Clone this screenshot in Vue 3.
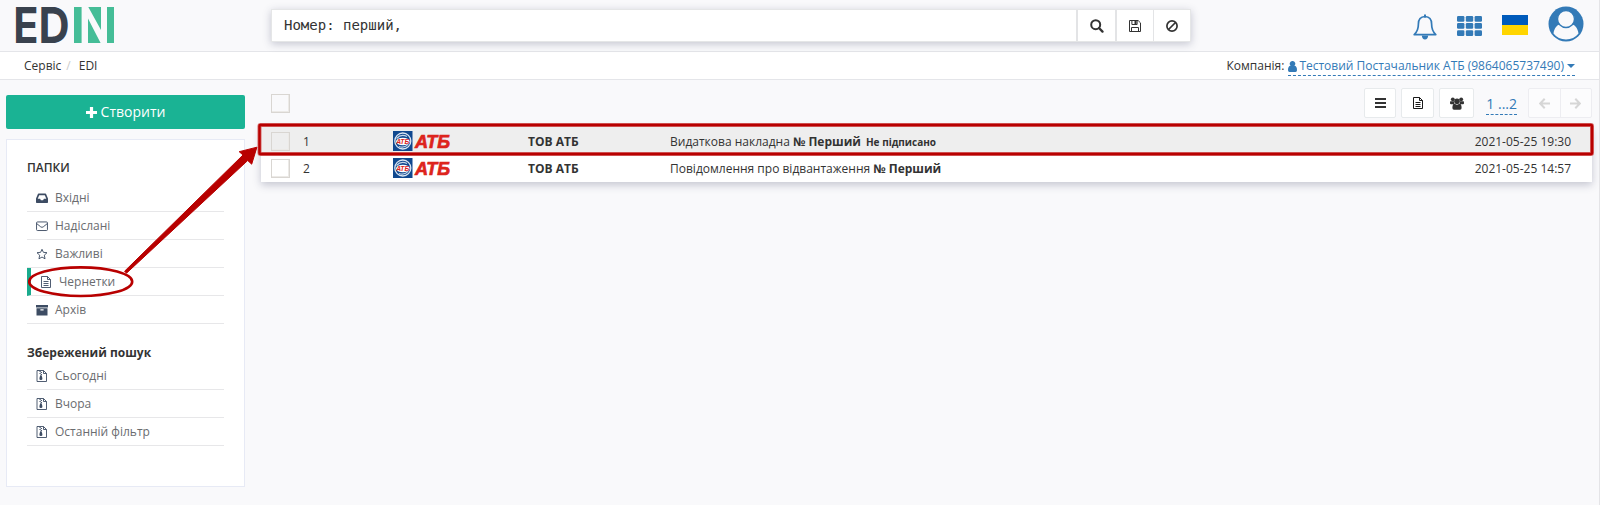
<script setup>
const folders = [
  { label: 'Вхідні', icon: 'inbox' },
  { label: 'Надіслані', icon: 'mail' },
  { label: 'Важливі', icon: 'star' },
  { label: 'Чернетки', icon: 'doc', active: true },
  { label: 'Архів', icon: 'archive' },
]
const searches = ['Сьогодні', 'Вчора', 'Останній фільтр']
const rows = [
  { id: 1, company: 'ТОВ АТБ', type: 'Видаткова накладна', number: '№ Перший', note: 'Не підписано', date: '2021-05-25 19:30' },
  { id: 2, company: 'ТОВ АТБ', type: 'Повідомлення про відвантаження', number: '№ Перший', note: '', date: '2021-05-25 14:57' },
]
</script>

<template>
  <div class="page">
    <svg class="defs" width="0" height="0">
      <symbol id="doc" viewBox="0 0 12 14">
        <path d="M1.500 1.500h6l3 3v8h-9zM7.500 1.500v3h3M3.500 6.500h5M3.500 8.500h5M3.500 10.500h5" fill="none" stroke="currentColor" stroke-width=".9" />
      </symbol>
      <symbol id="inbox" viewBox="0 0 12 14">
        <path fill-rule="evenodd" d="M2.600 2.600h6.800q.5 0 .7.5L12 7.600v3.700q0 .7-.7.7H.7q-.7 0-.7-.7V7.600l1.900-4.500q.2-.5.7-.5zM3.200 4.200 1.700 7.700h2.400l.8 1.500h2.200l.8-1.500h2.400L8.800 4.200z" fill="currentColor" />
      </symbol>
      <symbol id="mail" viewBox="0 0 13 14">
        <path d="M.6 3.600q0-1 1-1h9.800q1 0 1 1v7.300q0 1-1 1H1.600q-1 0-1-1zM.8 4.400l4.300 3.500q1.400 1.100 2.800 0l4.300-3.500" fill="none" stroke="currentColor" stroke-width="1" />
      </symbol>
      <symbol id="star" viewBox="0 0 13 14">
        <path d="M6.500 1.900 8 5.200l3.900.4-2.900 2.700.8 3.900-3.300-1.900-3.300 1.900.8-3.900L1.100 5.600l3.900-.4z" fill="none" stroke="currentColor" stroke-width="1" stroke-linejoin="round" />
      </symbol>
      <symbol id="archive" viewBox="0 0 12 14">
        <path fill-rule="evenodd" d="M0 2h12v2.600H0zM.5 5.200h11v7.300H.5zM4.400 6.200v1.200h3.200V6.200z" fill="currentColor" />
      </symbol>
      <symbol id="zip" viewBox="0 0 12 14">
        <path d="M1 1.500h6.500l3 3v8H1zM7.500 1.500v3h3" fill="none" stroke="currentColor" stroke-width=".9" />
        <path d="M3.500 2h1.200v1H3.500zM4.700 3h1.200v1H4.700zM3.500 4h1.200v1H3.500zM4.700 5h1.200v1H4.700zM4.200 6.200h1.400l.8 3q.2 1.900-1.500 1.900t-1.500-1.900z" fill="currentColor" />
      </symbol>
    </svg>

    <header class="top">
      <svg class="logo" width="100" height="38" viewBox="0 0 100 38">
        <g class="logo-text">
          <text transform="translate(-1.800 37) scale(.84 1)">E</text>
          <text transform="translate(23.500 37) scale(.87 1)">D</text>
        </g>
        <path d="M59 1h7.600v36H59zM73.300 1H86v23zM73 12.500 85.600 37H73zM92 1h7v36h-7z" fill="#45bd97" />
      </svg>
      <div class="search">
        <div class="query">Номер: перший,</div>
        <button class="sbtn first">
          <svg width="14" height="14" viewBox="0 0 14 14"><circle cx="5.700" cy="5.700" r="4.500" fill="none" stroke="#333" stroke-width="2" /><path d="m9 9 3.500 3.600" stroke="#333" stroke-width="2.300" stroke-linecap="round" /></svg>
        </button>
        <button class="sbtn">
          <svg width="12" height="12" viewBox="0 0 12 12"><path d="M.5.500h8.600l2.400 2.400v8.600H.500zM2.500 11.500V7.500h7v4M2.900.500v4h5.200v-4" fill="none" stroke="#333" /><path d="M5.500 1h2v3h-2z" fill="#333" /></svg>
        </button>
        <button class="sbtn last">
          <svg width="12" height="12" viewBox="0 0 12 12"><circle cx="6" cy="6" r="5.100" fill="none" stroke="#333" stroke-width="1.700" /><path d="m2.500 9.500 7-7" stroke="#333" stroke-width="1.700" /></svg>
        </button>
      </div>
      <div class="tools">
        <svg class="bell" width="24" height="27" viewBox="0 0 24 27">
          <path d="M12 2.500c-4.600.2-6.600 3.200-6.600 7.500 0 5.700-1.500 8.200-4.200 10.600h21.600c-2.700-2.400-4.200-4.900-4.200-10.600 0-4.300-2-7.300-6.600-7.500z" fill="none" stroke="#337ab7" stroke-width="1.700" stroke-linejoin="round" />
          <path d="M11 .5h2v3h-2zM8.800 21.500h6.400q-.4 4-3.200 4t-3.200-4z" fill="#337ab7" />
        </svg>
        <svg class="apps" width="25" height="20" viewBox="0 0 25 20" fill="#337ab7">
          <template v-for="r in 3" :key="r">
            <rect v-for="c in 3" :key="c" :x="(c - 1) * 8.800" :y="(r - 1) * 7.100" width="7.400" height="5.700" rx="1.200" />
          </template>
        </svg>
        <div class="flag"></div>
        <svg class="avatar" width="36" height="36" viewBox="0 0 36 36">
          <circle cx="18" cy="18" r="17.500" fill="#337ab7" />
          <path d="M5.500 27.500c.8-5.200 3.200-8.400 6.600-8.900q5.900 4.600 11.800 0c3.400.5 5.800 3.700 6.600 8.900q-4.600 5.900-12.500 5.900T5.500 27.500z" fill="#f9f9fb" />
          <circle cx="18" cy="13" r="8.500" fill="#f9f9fb" stroke="#337ab7" stroke-width="1.400" />
        </svg>
      </div>
    </header>

    <nav class="crumbs">
      <div class="path"><span>Сервіс</span><i>/</i><span>EDI</span></div>
      <div class="firm">
        <span>Компанія:</span>
        <a class="account">
          <svg width="9" height="11" viewBox="0 0 9 11" fill="#337ab7"><path d="M4.500 0a2.700 2.700 0 0 1 1.900 4.700Q9 4.800 9 9.200 9 11 7.500 11h-6Q0 11 0 9.200 0 4.800 2.600 4.700A2.700 2.700 0 0 1 4.500 0z" /></svg>
          <span>Тестовий Постачальник АТБ (9864065737490)</span>
          <b class="caret"></b>
        </a>
      </div>
    </nav>

    <main class="body">
      <aside class="side">
        <button class="create">
          <svg width="11" height="11" viewBox="0 0 11 11"><path d="M3.900 0h3.200v3.900H11v3.200H7.100V11H3.900V7.100H0V3.900h3.900z" fill="#fff" /></svg>
          <span>Створити</span>
        </button>
        <div class="panel">
          <h5 class="caps">ПАПКИ</h5>
          <ul>
            <li v-for="f in folders" :key="f.label" :class="{ active: f.active }">
              <svg class="ico" width="12" height="14"><use :href="'#' + f.icon" /></svg>{{ f.label }}
            </li>
          </ul>
          <h5 class="saved">Збережений пошук</h5>
          <ul>
            <li v-for="s in searches" :key="s">
              <svg class="ico" width="12" height="14"><use href="#zip" /></svg>{{ s }}
            </li>
          </ul>
        </div>
      </aside>

      <section class="list">
        <div class="bar">
          <span class="check"></span>
          <div class="actions">
            <button class="abtn b1"><svg width="11" height="10" viewBox="0 0 11 10"><path d="M0 1h11M0 5h11M0 9h11" stroke="#333" stroke-width="1.900" /></svg></button>
            <button class="abtn b2"><svg width="12" height="14"><use href="#doc" /></svg></button>
            <button class="abtn b3">
              <svg width="14" height="13" viewBox="0 0 14 13" fill="#333"><circle cx="2.800" cy="2.300" r="1.900" /><circle cx="11.200" cy="2.300" r="1.900" /><path d="M.3 4.300h3.800v3H1Q0 7.300 0 6.300 0 5 .3 4.300zM9.900 4.300h3.800q.3.700.3 2 0 1-1 1H9.900z" /><circle cx="7" cy="4.300" r="2.800" /><path d="M4.300 6.600Q7 8.800 9.700 6.600q1.900.6 1.900 4.400 0 1.800-1.600 1.800H4q-1.600 0-1.600-1.800 0-3.800 1.900-4.400z" /></svg>
            </button>
            <a class="pages">1 ...2</a>
            <div class="pager">
              <span><svg width="11" height="11" viewBox="0 0 11 11"><path d="M5.700.8 1.200 5.500l4.500 4.700M1.500 5.500H11" fill="none" stroke="#d6d6d6" stroke-width="2" /></svg></span>
              <span><svg width="11" height="11" viewBox="0 0 11 11"><path d="m5.300.8 4.500 4.700-4.500 4.700M9.500 5.500H0" fill="none" stroke="#d6d6d6" stroke-width="2" /></svg></span>
            </div>
          </div>
        </div>
        <div class="table">
          <div v-for="r in rows" :key="r.id" class="row" :class="{ hover: r.id === 1 }">
            <span class="check"></span>
            <span class="num">{{ r.id }}</span>
            <svg class="brand" width="58" height="20" viewBox="0 0 58 20">
              <rect width="19.500" height="20" fill="#10488f" />
              <circle cx="9.800" cy="10" r="8" fill="none" stroke="#dbe6f2" stroke-width="1.300" />
              <ellipse cx="9.800" cy="10.500" rx="6.800" ry="3.800" fill="#fff" />
              <path d="M3.500 7.500Q8 2.500 14 5.500M6 15.500q6 2 9.500-3" fill="none" stroke="#c4d6ea" stroke-width="1.200" />
              <text class="mini" x="3.200" y="12.500" textLength="13" lengthAdjust="spacingAndGlyphs">АТБ</text>
              <text class="word" x="22" y="16.800" textLength="35" lengthAdjust="spacingAndGlyphs">АТБ</text>
            </svg>
            <b class="company">{{ r.company }}</b>
            <span class="title">{{ r.type }} <b>{{ r.number }}</b><b v-if="r.note" class="note">{{ r.note }}</b></span>
            <span class="date">{{ r.date }}</span>
          </div>
        </div>
      </section>
    </main>

    <svg class="marks" width="1600" height="505" viewBox="0 0 1600 505">
      <rect x="259.500" y="125" width="1332.500" height="29" rx="1" fill="none" stroke="#d66a6a" stroke-width="4" />
      <rect x="259.500" y="125" width="1332.500" height="29" rx="1" fill="none" stroke="#b80000" stroke-width="2.400" />
      <ellipse cx="80.700" cy="281.700" rx="51.500" ry="14.300" fill="none" stroke="#b80000" stroke-width="2.600" />
      <path d="M124.600 271.200 243 155l-3.800-3.300 17.700-4.500-5.200 17-4-3.700L126.500 273.200z" fill="#b80000" stroke="#b80000" stroke-linejoin="round" />
    </svg>
  </div>
</template>

<style>
body { background: #f9f9fb; }
</style>

<style scoped>
* { box-sizing: border-box; }
.page { position: relative; width: 1600px; height: 505px; overflow: hidden; background: #f9f9fb; color: #333; font: 12px/18px "Open Sans", sans-serif; border-right: 1px solid #e4e4e7; }
.defs { position: absolute; }
button { font: inherit; padding: 0; border: 0; background: #fff; display: flex; align-items: center; justify-content: center; }
.top { height: 52px; border-bottom: 1px solid #e4e5e9; display: flex; align-items: flex-start; }
.logo { margin: 6px 0 0 15px; overflow: visible; }
.logo-text { font: 700 49.500px Inter, sans-serif; fill: #39424e; }
.search { margin: 9px 0 0 156px; width: 920px; height: 33px; display: flex; background: #fff; border: 1px solid #e5e6e7; box-shadow: 0 2px 8px rgba(60, 65, 100, .28); }
.query { flex: 1; padding-left: 12px; font: 14px/30px "DejaVu Sans Mono", monospace; }
.sbtn { width: 37px; border-left: 1px solid #e3e4e6; }
.sbtn.first { width: 40px; border-left: 2px solid #e3e4e6; border-right: 1px solid #e3e4e6; }
.tools { margin-left: auto; display: flex; padding-right: 15px; }
.bell { margin: 14px 20px 0 0; }
.apps { margin: 16px 20px 0 0; }
.flag { width: 26px; height: 20px; margin: 15px 20px 0 0; background: linear-gradient(#005bbb 50%, #ffd500 50%); }
.avatar { margin-top: 6px; }
.crumbs { height: 28px; background: #fff; border-bottom: 1px solid #e4e5e9; display: flex; justify-content: space-between; padding: 5px 24px 0 24px; }
.path i { color: #ccc; font-style: normal; margin: 0 8px 0 5px; }
.firm { display: flex; gap: 4px; }
.account { display: flex; align-items: center; height: 19px; color: #337ab7; border-bottom: 1px dashed #337ab7; }
.account span { margin: 0 3px 0 2px; }
.caret { border: 4px solid transparent; border-top-color: #337ab7; border-bottom: 0; }
.body { display: flex; align-items: flex-start; }
.side { width: 239px; margin: 15px 0 0 6px; }
.create { width: 100%; height: 34px; border-radius: 2px; background: #1ab394; color: #fff; font-size: 14px; gap: 4px; }
.panel { margin-top: 10px; height: 348px; border: 1px solid #e7eaf5; background: #fff; padding: 19px 20px 0; }
h5 { margin: 0; font-size: 12px; line-height: 18px; font-weight: 700; color: #333; }
.caps { font-weight: 600; margin-bottom: 7px; }
.saved { margin: 20px 0 0; }
ul { list-style: none; margin: 0; padding: 0; }
li { height: 28px; display: flex; align-items: center; padding: 1px 0 0 9px; border-bottom: 1px solid #e7e7e9; color: #6a6c6f; }
li.active { border-left: 4px solid #1aab8d; }
.ico { margin-right: 7px; color: #3d4c63; overflow: visible; }
.list { width: 1331px; margin-left: 16px; }
.bar { height: 47px; display: flex; align-items: flex-start; padding: 8px 0 0 10px; }
.check { flex: none; width: 19px; height: 19px; border: 1px solid #d9d6d2; box-shadow: inset -1px -1px 0 #eceae7; }
.bar > .check { margin-top: 6px; }
.actions { margin-left: auto; display: flex; }
.abtn { height: 30px; border: 1px solid #e7eaec; border-radius: 2px; }
.b1 { width: 32px; margin-right: 5px; }
.b2 { width: 33px; margin-right: 5px; }
.b3 { width: 35px; margin-right: 12px; }
.actions .b3 { margin-left: 0; }
.pages { color: #337ab7; font-size: 14px; line-height: 20px; height: 27px; padding-top: 6px; border-bottom: 1px dashed #337ab7; margin-right: 11px; white-space: nowrap; }
.pager { display: flex; width: 64px; height: 30px; border: 1px solid #ededf1; border-radius: 2px; background: #fcfcfd; }
.pager span { flex: 1; display: flex; align-items: center; justify-content: center; }
.pager span + span { border-left: 1px solid #ededf1; }
.table { height: 55px; background: #fff; box-shadow: 0 3px 8px rgba(60, 65, 100, .28); }
.row { height: 27px; display: flex; align-items: center; padding-left: 10px; white-space: nowrap; }
.row.hover { height: 28px; background: #eee; padding-top: 1px; }
.num { width: 91px; padding-left: 13px; }
.brand { margin: -2px 0 0 12px; }
.brand text { font-family: "Liberation Sans", sans-serif; font-weight: 700; font-style: italic; fill: #dd241c; }
.brand .word { font-size: 18.500px; stroke: #dd241c; stroke-width: .7px; }
.brand .mini { font-size: 6.500px; }
.company { width: 142px; margin-left: 77px; }
.note { font-size: 10px; margin-left: 5px; }
.date { margin-left: auto; padding-right: 21px; }
.marks { position: absolute; left: 0; top: 0; pointer-events: none; }
</style>
